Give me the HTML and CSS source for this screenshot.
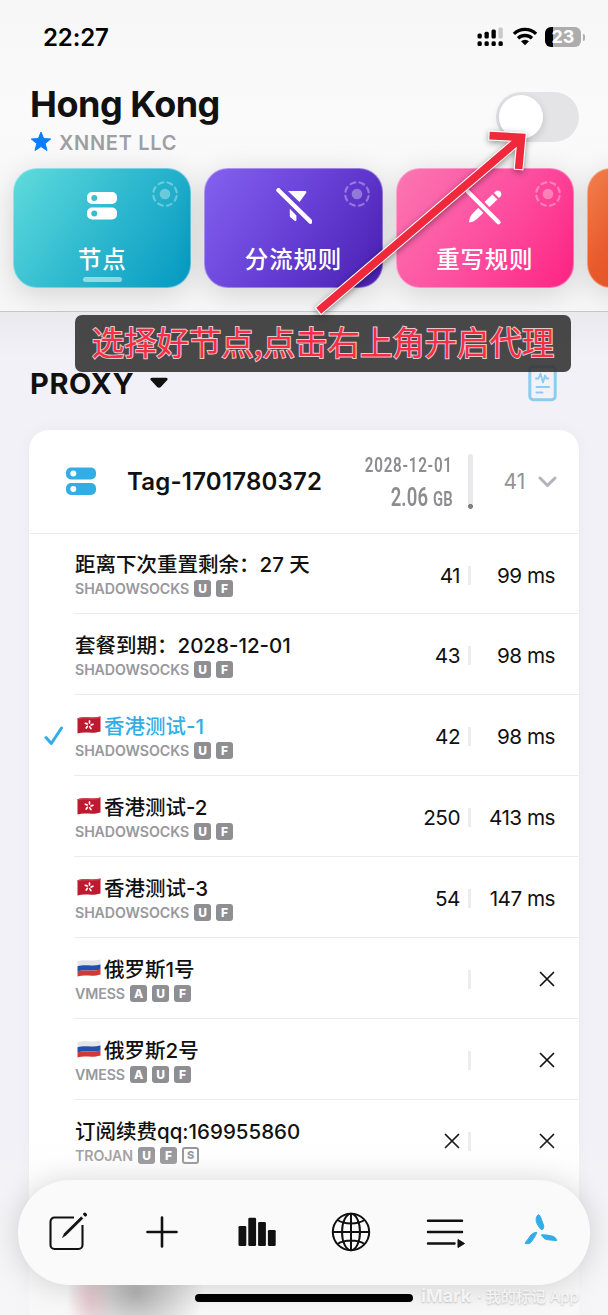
FILE: index.html
```
<!DOCTYPE html>
<html lang="zh-CN">
<head>
  <meta charset="UTF-8" />
  <meta name="viewport" content="width=device-width, initial-scale=1.0"/>
  <title>Hong Kong</title>
  <link rel="stylesheet" href="styles.css">
</head>
<body>

  <!-- shared icons -->
  <svg class="defs" width="0" height="0">
    <symbol id="server" viewBox="0 0 32 30">
      <path fill="currentColor" fill-rule="evenodd" d="M6 .5h20a5 5 0 0 1 5 5v2a5 5 0 0 1-5 5H6a5 5 0 0 1-5-5v-2a5 5 0 0 1 5-5zM8.3 3.5a3 3 0 1 0 0 6 3 3 0 0 0 0-6zM6 16h20a5 5 0 0 1 5 5v2a5 5 0 0 1-5 5H6a5 5 0 0 1-5-5v-2a5 5 0 0 1 5-5zM8.3 19a3 3 0 1 0 0 6 3 3 0 0 0 0-6z"/>
    </symbol>
    <symbol id="dial" viewBox="0 0 26 26">
      <circle cx="13" cy="13" r="5.3" fill="currentColor"/>
      <circle cx="13" cy="13" r="11.8" fill="none" stroke="currentColor" stroke-width="2.2" stroke-linecap="round" stroke-dasharray="4.9 4.37" stroke-dashoffset="-2.2"/>
    </symbol>
    <symbol id="cross" viewBox="0 0 16 16">
      <path d="M1.5 1.5l13 13M14.5 1.5l-13 13" fill="none" stroke="currentColor" stroke-width="1.7" stroke-linecap="round"/>
    </symbol>
    <symbol id="hk" viewBox="0 0 24 18">
      <path d="M.5 2.2C7 .2 15 2.6 23.5.6v14.8C15 18.2 8 15 .5 17.4z" fill="#bd1a2f"/>
      <path d="M.5 2.2C7 .2 15 2.6 23.5.6v1.2C15 3.8 7 1.4.5 3.4z" fill="#d0434f"/>
      <g fill="#fff" transform="translate(12 9)">
        <ellipse id="petal" cx="0.5" cy="-3" rx="0.9" ry="2"/>
        <use href="#petal" transform="rotate(72)"/>
        <use href="#petal" transform="rotate(144)"/>
        <use href="#petal" transform="rotate(216)"/>
        <use href="#petal" transform="rotate(288)"/>
      </g>
    </symbol>
    <symbol id="ru" viewBox="0 0 24 18">
      <path d="M.5 2.2C7 .2 15 2.6 23.5.6v5C15 7.6 7 5.2.5 7.2z" fill="#e3e5e9"/>
      <path d="M.5 7.2C7 5.2 15 7.6 23.5 5.6v5C15 12.8 7 10.2.5 12.3z" fill="#2450ad"/>
      <path d="M.5 12.3C7 10.2 15 12.8 23.5 10.6v4.8C15 18.2 8 15 .5 17.4z" fill="#cf3a36"/>
    </symbol>
  </svg>

  <header>
    <div class="status">
      <span class="time">22:27</span>
      <div class="status-icons">
        <svg width="27" height="20" viewBox="0 0 27 20">
          <g>
            <rect x="0.5" y="6.5" width="4.3" height="5" rx="1.5"/>
            <rect x="7.5" y="4.8" width="4.3" height="6.7" rx="1.5"/>
            <rect x="14.5" y="2.5" width="4.3" height="9" rx="1.5"/>
            <rect x="21.5" y="0.5" width="4.3" height="11" rx="1.5" fill="#c9c9ca"/>
            <rect x="0.5" y="14.3" width="4.3" height="4.7" rx="1.5"/>
            <rect x="7.5" y="14.3" width="4.3" height="4.7" rx="1.5"/>
            <rect x="14.5" y="14.3" width="4.3" height="4.7" rx="1.5"/>
            <rect x="21.5" y="14.3" width="4.3" height="4.7" rx="1.5"/>
          </g>
        </svg>
        <svg width="26" height="19" viewBox="0 0 26 19">
          <g fill="none" stroke="#000" stroke-width="3.3">
            <path d="M1.9 6.9a16 16 0 0 1 22.2 0"/>
            <path d="M6 11.3a10.1 10.1 0 0 1 14 0"/>
          </g>
          <path d="M9 14.3a5.8 5.8 0 0 1 8 0L13 18.2z"/>
        </svg>
        <div class="battery"><span>23</span></div>
      </div>
    </div>

    <div class="title-row">
      <div>
        <h1>Hong Kong</h1>
        <p class="isp">
          <svg width="22" height="21" viewBox="0 0 22 21"><path d="M11 1l2.6 6.6 7.1.4-5.5 4.5 1.8 7L11 15.6l-6 3.9 1.8-7L1.3 8l7.1-.4z" fill="#0a7cff" stroke="#0a7cff" stroke-linejoin="round"/></svg>
          <span>XNNET LLC</span>
        </p>
      </div>
      <div class="switch"></div>
    </div>

    <nav class="modules">
      <a class="module teal active">
        <svg class="dial" width="26" height="26"><use href="#dial"/></svg>
        <svg class="icon" width="32" height="38" viewBox="0 -3.5 32 38"><use href="#server" width="32" height="30"/></svg>
        <span>节点</span>
      </a>
      <a class="module purple">
        <svg class="dial" width="26" height="26"><use href="#dial"/></svg>
        <svg class="icon" width="38" height="38" viewBox="0 0 38 38">
          <path d="M15.8 20.8l6.600 6.700v4.500c0 1.200-.9 1.500-1.800.8l-3.700-3c-.8-.6-1.100-1.300-1.100-2.200z" fill="#fff"/>
          <path d="M14 3h17.200c1.200 0 1.600 1.200.9 2.100L25.500 14z" fill="#fff"/>
          <path d="M5.500 1l32 32" stroke="#673fd6" stroke-width="5"/>
          <path d="M4.500 2.200l32 31.500" stroke="#fff" stroke-width="4.400" stroke-linecap="round"/>
        </svg>
        <span>分流规则</span>
      </a>
      <a class="module pink">
        <svg class="dial" width="26" height="26"><use href="#dial"/></svg>
        <svg class="icon" width="38" height="38" viewBox="0 0 38 38">
          <path d="M3 34.500c.3-4 1.500-7 4-9.500L29.500 3.500c3-3 8 1.500 5 5L12.500 29.500c-3 3-5.500 4.500-9.500 5z" fill="#fff"/>
          <path d="M27 5.500l5.500 5.500" stroke="#fd50a0" stroke-width="2.200"/>
          <path d="M1 2.500l32 32" stroke="#fd50a0" stroke-width="8.500"/>
          <path d="M1.500 3.200l31 31" stroke="#fff" stroke-width="4.200" stroke-linecap="round"/>
        </svg>
        <span>重写规则</span>
      </a>
      <a class="module orange"></a>
    </nav>
  </header>

  <main>
    <div class="group">
      <h2>PROXY</h2>
      <svg width="18" height="12" viewBox="0 0 18 12"><path d="M2 .8h14c1.500 0 2 1.400 1.300 2.300l-6.500 7c-1 1-2.600 1-3.600 0l-6.500-7C0 2.200.5.800 2 .8z" fill="#111"/></svg>
      <svg class="report" width="29" height="37" viewBox="0 0 29 37">
        <g fill="none" stroke="#8bcdf0" stroke-linecap="round" stroke-linejoin="round">
          <rect x="1.800" y="1.800" width="25.400" height="33" rx="3.500" stroke-width="3"/>
          <path d="M8 13.500h2.500l2-5 2.500 9 2-7 1.500 3h2" stroke-width="1.800"/>
          <path d="M8.500 22h12.500M8.500 27.500h6" stroke-width="2"/>
        </g>
      </svg>
    </div>

    <section class="card">
      <div class="card-head">
        <svg class="server" width="32" height="30"><use href="#server"/></svg>
        <h3>Tag-1701780372</h3>
        <div class="usage">
          <p class="date">2028-12-01</p>
          <p class="data">2.06 <small>GB</small></p>
        </div>
        <div class="meter"></div>
        <span class="count">41</span>
        <svg width="19" height="12" viewBox="0 0 19 12"><path d="M2 2l7.500 7.500L17 2" fill="none" stroke="#b3b3bd" stroke-width="3" stroke-linecap="round" stroke-linejoin="round"/></svg>
      </div>

      <ul class="nodes">
        <li>
          <div class="info">
            <h4>距离下次重置剩余：27 天</h4>
            <p>SHADOWSOCKS <b>U</b><b>F</b></p>
          </div>
          <span class="tcp">41</span><i></i><span class="ping">99 ms</span>
        </li>
        <li>
          <div class="info">
            <h4>套餐到期：2028-12-01</h4>
            <p>SHADOWSOCKS <b>U</b><b>F</b></p>
          </div>
          <span class="tcp">43</span><i></i><span class="ping">98 ms</span>
        </li>
        <li class="selected">
          <svg class="check" width="20" height="20" viewBox="0 0 20 20"><path d="M2 11.500l5.300 6L17.500 2" fill="none" stroke="#32ade6" stroke-width="3" stroke-linecap="round" stroke-linejoin="round"/></svg>
          <div class="info">
            <h4><svg class="flag" width="24" height="18"><use href="#hk"/></svg>香港测试-1</h4>
            <p>SHADOWSOCKS <b>U</b><b>F</b></p>
          </div>
          <span class="tcp">42</span><i></i><span class="ping">98 ms</span>
        </li>
        <li>
          <div class="info">
            <h4><svg class="flag" width="24" height="18"><use href="#hk"/></svg>香港测试-2</h4>
            <p>SHADOWSOCKS <b>U</b><b>F</b></p>
          </div>
          <span class="tcp">250</span><i></i><span class="ping">413 ms</span>
        </li>
        <li>
          <div class="info">
            <h4><svg class="flag" width="24" height="18"><use href="#hk"/></svg>香港测试-3</h4>
            <p>SHADOWSOCKS <b>U</b><b>F</b></p>
          </div>
          <span class="tcp">54</span><i></i><span class="ping">147 ms</span>
        </li>
        <li>
          <div class="info">
            <h4><svg class="flag" width="24" height="18"><use href="#ru"/></svg>俄罗斯1号</h4>
            <p>VMESS <b>A</b><b>U</b><b>F</b></p>
          </div>
          <span class="tcp"></span><i></i><span class="ping"><svg width="16" height="16"><use href="#cross"/></svg></span>
        </li>
        <li>
          <div class="info">
            <h4><svg class="flag" width="24" height="18"><use href="#ru"/></svg>俄罗斯2号</h4>
            <p>VMESS <b>A</b><b>U</b><b>F</b></p>
          </div>
          <span class="tcp"></span><i></i><span class="ping"><svg width="16" height="16"><use href="#cross"/></svg></span>
        </li>
        <li>
          <div class="info">
            <h4>订阅续费qq:169955860</h4>
            <p>TROJAN <b>U</b><b>F</b><b class="outline">S</b></p>
          </div>
          <span class="tcp"><svg width="16" height="16"><use href="#cross"/></svg></span><i></i><span class="ping"><svg width="16" height="16"><use href="#cross"/></svg></span>
        </li>
      </ul>
    </section>
  </main>

  <div class="fade"></div>

  <nav class="tabbar">
    <a><svg width="40" height="40" viewBox="0 0 40 40">
      <path d="M27 5.500H7.500a4 4 0 0 0-4 4v23.500a4 4 0 0 0 4 4h24a4 4 0 0 0 4-4V13" fill="none" stroke="#111" stroke-width="2.100"/>
      <path d="M15.500 25.500l2-4.300L34.200 4.800l1.700 1.700L19.200 23z" fill="#111" stroke="#111" stroke-width=".6" stroke-linejoin="round"/>
      <path d="M37.800 2.200l.6.600" stroke="#111" stroke-width="3.200" stroke-linecap="round"/>
    </svg></a>
    <a><svg width="40" height="40" viewBox="0 0 40 40"><path d="M20 5.500v29M5.500 20h29" stroke="#111" stroke-width="2.600" stroke-linecap="round"/></svg></a>
    <a><svg width="40" height="40" viewBox="0 0 40 40" fill="#111">
      <rect x="1.500" y="14" width="7.800" height="20" rx="1.300"/>
      <rect x="11.300" y="5.800" width="7.800" height="28.200" rx="1.300"/>
      <rect x="21.100" y="10" width="7.800" height="24" rx="1.300"/>
      <rect x="30.900" y="18" width="7.800" height="16" rx="1.300"/>
    </svg></a>
    <a><svg width="40" height="40" viewBox="0 0 40 40">
      <g fill="none" stroke="#111" stroke-width="2">
        <circle cx="20" cy="20" r="18.200"/>
        <ellipse cx="20" cy="20" rx="9" ry="18.200"/>
        <path d="M20 1.800v36.400M1.800 20h36.400M6.500 8c7 4.600 20 4.600 27 0M6.500 32c7-4.600 20-4.600 27 0"/>
      </g>
    </svg></a>
    <a><svg width="40" height="40" viewBox="0 0 40 40">
      <path d="M2 8.700h34M2 20h34M2 31.500h26.500" stroke="#111" stroke-width="2.500" stroke-linecap="round"/>
      <path d="M32 27.500l6.500 4-6.500 4z" fill="#111" stroke="#111" stroke-linejoin="round"/>
    </svg></a>
    <a><svg width="40" height="40" viewBox="0 0 40 40" fill="#32ade6" stroke="#32ade6" stroke-linejoin="round">
      <path d="M17.500 2.500c.8.300 1.400 1 1.800 2l3.200 8.500c.5 1.500.2 2.700-.5 4l-1 .7c-1-.2-1.700-.8-2.300-1.700-2-3-3.700-5.500-3.600-8.500.1-2.200 1-4.200 2.400-5z"/>
      <path d="M15.800 20.300c-3.300.2-5.300 1.700-6.800 4l-5 7c1.500.8 4 .5 5.500-.5 1.500-1.800 5.200-6.600 6.300-10.500z"/>
      <path d="M20.500 22.800c1 2.700 3.500 4.700 6.500 5l8.700.8c-.2-1.600-1.500-3.400-3.200-4.100-3.500-1.300-8.500-1.700-12-1.700z"/>
    </svg></a>
  </nav>

  <div class="home-bar"></div>
  <div class="watermark"><b>iMark</b> · 我的标记 App</div>

  <!-- tutorial hint -->
  <div class="hint">选择好节点,点击右上角开启代理</div>
  <svg class="arrow" width="608" height="320" viewBox="0 0 608 320">
    <g fill="none">
      <path d="M317.700 311.600L521 138M488.500 135.500l33 1.800-3 32.700" stroke="#fff" stroke-width="9.800"/>
      <path d="M318.700 310.800L521 138M489.500 135.600l32 1.700-2.900 31.700" stroke="#f0283c" stroke-width="7.700"/>
    </g>
  </svg>

</body>
</html>
```
FILE: styles.css
```
* {
  margin: 0;
  padding: 0;
  box-sizing: border-box;
}

body {
  position: relative;
  width: 608px;
  height: 1315px;
  overflow: hidden;
  font-family: Inter, 'Noto Sans CJK SC', sans-serif;
  background: #f2f1f7;
  color: #111;
}

svg {
  display: block;
  flex: none;
}

.defs {
  position: absolute;
}

header {
  height: 312px;
  overflow: hidden;
  background: linear-gradient(#f7f7f7, #fafafb 35%, #f7f7f8);
  border-bottom: 1px solid #c6c6c8;
}

.status {
  display: flex;
  justify-content: space-between;
  height: 75px;
  padding: 22px 23px 0 43px;
}

.time {
  font-size: 24px;
  font-weight: 600;
  line-height: 32px;
  letter-spacing: -0.1px;
  color: #000;
}

.status-icons {
  display: flex;
  align-items: flex-start;
  gap: 7.5px;
  padding-top: 5px;
}

.battery {
  position: relative;
  width: 36px;
  height: 20px;
  margin-right: 4px;
  border-radius: 6px;
  background: linear-gradient(90deg, #000 8.5px, #adadae 8.5px);
  color: #fff;
  font-size: 18px;
  font-weight: 700;
  line-height: 20px;
  text-align: center;
}

.battery::after {
  content: "";
  position: absolute;
  right: -4px;
  top: 7px;
  width: 2.5px;
  height: 7px;
  border-radius: 0 3px 3px 0;
  background: #adadae;
}

.title-row {
  display: flex;
  justify-content: space-between;
  height: 93px;
  padding: 7px 29px 0 30px;
}

h1 {
  font-size: 36px;
  font-weight: 700;
  line-height: 44px;
  letter-spacing: -0.5px;
}

.isp {
  display: flex;
  align-items: center;
  gap: 7px;
  margin-top: 5px;
  line-height: 24px;
  font-size: 20px;
  font-weight: 600;
  letter-spacing: 0.7px;
  color: #9f9fa3;
}

.isp svg {
  margin-top: -3px;
}

.switch {
  width: 83px;
  height: 50px;
  margin-top: 10px;
  padding: 3px;
  border-radius: 25px;
  background: #e4e4e6;
}

.switch::before {
  content: "";
  display: block;
  width: 44px;
  height: 44px;
  border-radius: 50%;
  background: #fff;
  box-shadow: 0 3px 8px rgba(0,0,0,0.15);
}

.modules {
  display: flex;
  gap: 13px;
  padding-left: 13px;
}

.module {
  position: relative;
  flex: none;
  display: flex;
  flex-direction: column;
  align-items: center;
  width: 178.3px;
  height: 120px;
  padding-top: 19px;
  border: 1px solid rgba(255,255,255,0.35);
  border-radius: 24px;
  background-origin: border-box;
  box-shadow: 0 6px 30px rgba(0,0,0,0.15);
  color: #fff;
}

.module span {
  margin-top: 18px;
  font-size: 23.5px;
  font-weight: 500;
  line-height: 32px;
  letter-spacing: 0.8px;
}

.teal { background-image: linear-gradient(125deg, #60dcdc, #2eb9cf 50%, #0498c1); }
.purple { background-image: linear-gradient(125deg, #8462f0, #673fd6 50%, #491fb0); }
.pink { background-image: linear-gradient(125deg, #fb77b2, #fd50a0 50%, #fe2383); }
.orange { background-image: linear-gradient(125deg, #f2814f, #e8592b 30%, #dd3a12); }

.dial {
  position: absolute;
  top: 12px;
  right: 12px;
  opacity: 0.33;
}

.active::after {
  content: "";
  width: 39px;
  height: 5px;
  margin-top: 1px;
  border-radius: 3px;
  background: rgba(255,255,255,0.5);
}

main {
  height: 1003px;
  padding: 49px 29px 0;
  overflow: hidden;
  background: linear-gradient(#e9e9ee, #f2f1f7 46px);
}

.group {
  display: flex;
  align-items: center;
  height: 44px;
}

h2 {
  font-size: 29px;
  font-weight: 700;
  letter-spacing: 0.6px;
  margin: 0 16px 0 1px;
}

.report {
  margin-left: auto;
  margin-right: 22px;
}

.card {
  margin-top: 25px;
  height: 960px;
  border-radius: 20px;
  background: #fff;
  box-shadow: 0 0 18px rgba(0,0,0,0.035);
}

.card-head {
  display: flex;
  align-items: center;
  height: 103px;
  padding: 0 22px 0 36px;
}

.server {
  color: #32ade6;
}

h3 {
  width: 210px;
  margin-left: 30px;
  font-size: 24px;
  font-weight: 600;
  letter-spacing: 0.2px;
  white-space: nowrap;
}

.usage {
  flex: 1;
  padding-top: 4px;
  font-family: Roboto, sans-serif;
  color: #8c8c91;
  text-align: right;
  white-space: nowrap;
}

/* narrow digits */
.usage p {
  transform: scaleX(0.74);
  transform-origin: right;
}

.date {
  font-size: 20.5px;
  font-weight: 600;
  line-height: 30px;
  letter-spacing: 1px;
}

.data {
  font-size: 25px;
  font-weight: 600;
  line-height: 36px;
  letter-spacing: 0.2px;
}

.data small {
  font-size: 20px;
}

.meter {
  width: 5px;
  height: 55px;
  margin: 0 31px 0 15px;
  border-radius: 3px;
  background: radial-gradient(circle at 2.5px 52.5px, #808085 2.3px, #e8e8ea 2.7px);
}

.count {
  width: 35px;
  font-size: 21px;
  color: #929297;
}

.nodes {
  list-style: none;
}

.nodes li {
  position: relative;
  display: flex;
  height: 81px;
  margin-left: 45px;
  padding-right: 24px;
  border-top: 1px solid #ececee;
}

.nodes li:first-child {
  height: 80px;
  margin-left: 0;
  padding-left: 45px;
}

.info {
  flex: 1;
  padding: 14px 0 0 1px;
}

.nodes li:first-child .info {
  padding-top: 13px;
}

h4 {
  display: flex;
  align-items: center;
  height: 32px;
  font-size: 20.5px;
  font-weight: 500;
  white-space: nowrap;
}

.flag {
  margin: 0 3px 0 2px;
}

.info p {
  display: flex;
  align-items: center;
  height: 18px;
  font-size: 14.2px;
  font-weight: 600;
  letter-spacing: -0.1px;
  color: #98989d;
}

.info b {
  width: 17px;
  height: 17px;
  margin-left: 5px;
  border-radius: 3px;
  background: #8e8e93;
  color: #fff;
  font-size: 12px;
  font-weight: 800;
  line-height: 17px;
  text-align: center;
}

.info .outline {
  border: 2px solid #8e8e93;
  background: #fff;
  color: #8e8e93;
  font-size: 11px;
  line-height: 13px;
}

.tcp, .ping {
  display: flex;
  align-items: center;
  justify-content: flex-end;
  height: 82px;
  font-size: 20.7px;
  letter-spacing: -0.5px;
  white-space: nowrap;
}

.ping {
  width: 84px;
}

.nodes i {
  width: 3px;
  height: 19px;
  margin: 32px 0 0 8px;
  background: #ececee;
}

.selected h4 {
  color: #32ade6;
}

.check {
  position: absolute;
  left: -30px;
  top: 31px;
}

.fade {
  position: absolute;
  left: 0;
  right: 0;
  bottom: 0;
  height: 180px;
  background:
    radial-gradient(ellipse 24px 45px at 90px 165px, rgba(230,150,165,0.35), transparent),
    radial-gradient(ellipse 68px 55px at 136px 158px, rgba(110,110,110,0.5), transparent),
    linear-gradient(transparent, rgba(246,246,247,0.8) 75%);
}

.tabbar {
  position: absolute;
  left: 18px;
  bottom: 30px;
  display: grid;
  grid-template-columns: repeat(6, 94.7px);
  align-items: center;
  justify-items: center;
  width: 571.5px;
  height: 105px;
  padding: 0 0 1px 2px;
  border-radius: 52px;
  background: #fafafa;
  box-shadow: 0 2px 30px rgba(0,0,0,0.16);
}

.home-bar {
  position: absolute;
  left: 195px;
  bottom: 13px;
  width: 218px;
  height: 8px;
  border-radius: 4px;
  background: #000;
}

.watermark {
  position: absolute;
  left: 421px;
  bottom: 6px;
  font-size: 15px;
  font-weight: 500;
  line-height: 24px;
  white-space: nowrap;
  color: #f4f4f4;
  text-shadow: 0 1px 2px rgba(0,0,0,0.22);
}

.watermark b {
  font-size: 18px;
  margin-right: 2px;
}

.hint {
  position: absolute;
  left: 75px;
  top: 315px;
  width: 496px;
  height: 57px;
  border-radius: 7px;
  background: rgba(50,50,50,0.89);
  color: #f92d42;
  font-family: 'Noto Sans CJK SC', sans-serif;
  font-size: 32.4px;
  line-height: 51px;
  text-align: center;
  white-space: nowrap;
  -webkit-text-stroke: 2px rgba(255,225,228,0.85);
  paint-order: stroke fill;
}

.arrow {
  position: absolute;
  left: 0;
  top: 0;
  filter: drop-shadow(0 2px 3px rgba(0,0,0,0.4));
}
```
